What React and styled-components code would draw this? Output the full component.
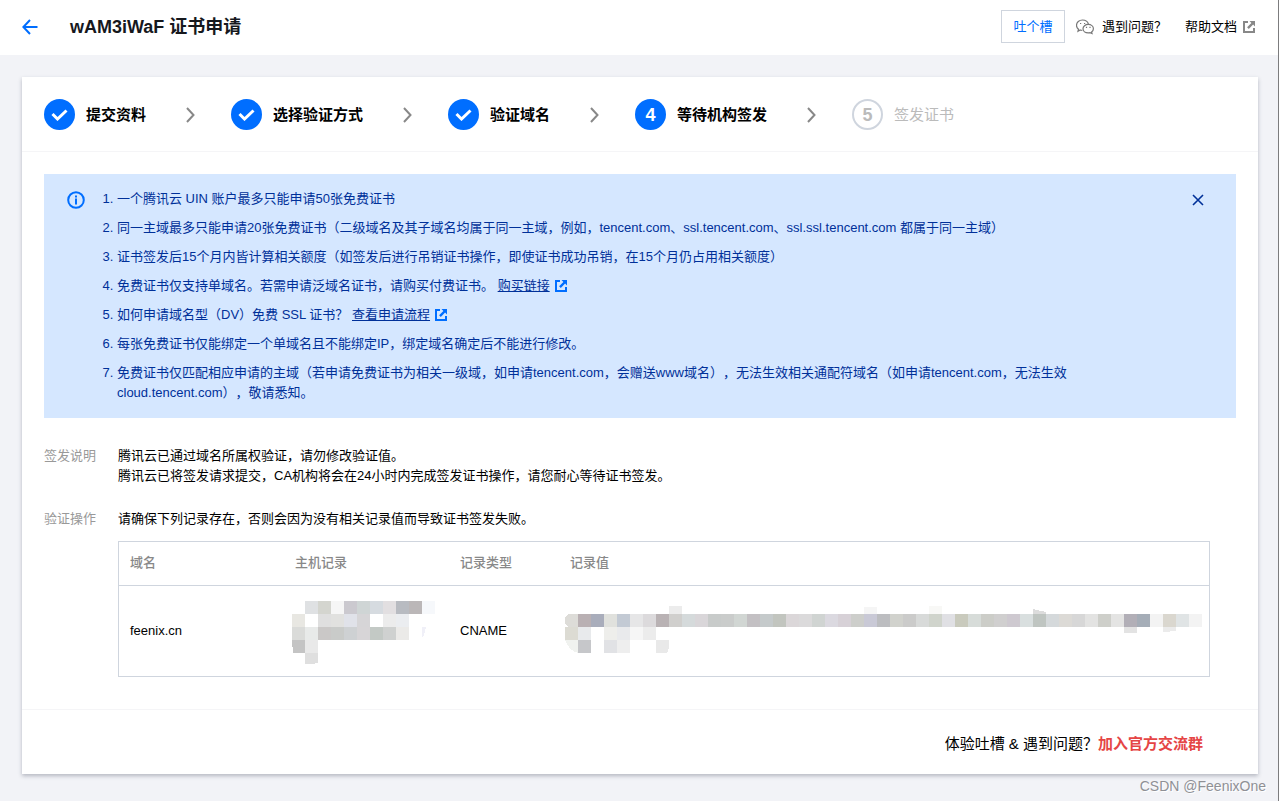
import React, { useState } from "react";
import styled, { createGlobalStyle } from "styled-components";

const STEPS = [
  { title: "提交资料", status: "done" },
  { title: "选择验证方式", status: "done" },
  { title: "验证域名", status: "done" },
  { title: "等待机构签发", status: "current" },
  { title: "签发证书", status: "wait" },
];

const TILE = 13;

// [column, top, colors of the tiles from that column on]
const HOST_MOSAIC = [
  [1, 3, "#dfe1e3 #d4d5cf #f6f6f6 #cbc9cf #cfd5d5 #d6dbe0 #e2dfe1 #b8bbc1 #bbb7b8 #f6f8fb"],
  [0, 16, "#e8e7e2 #fff #dfdfdf #e1e1df #e0e2e9 #d6d5d7 #fff #ececec #ebedf0"],
  [0, 29, "#dadbd9 #e8eae9 #cac8c7 #c9cbc9 #ced1d3 #d7d5d7 #c3c9c5 #cfd1d0 #ebeae8"],
  [1, 42, "#e9e9e9"],
];

const VALUE_MOSAIC = [
  [
    1,
    16,
    "#b9b0b3 #a9adbb #e0e1dd #c3cad4 #e6e6e7 #dcdadc #b9b2b4 #d0cfcd #d5dadb #d9d6d9 #c8cbca #cacccb #d1d6d3 #c3c0c3 #c5cacb #c2c5bf #dbd7d9 #dbdadb #d0d4d2 #dbd9e0 #d7d1d7 #cdcecb #c9c9d6 #bcbdc0 #d1d2cd #cbcbca #d8dad9 #d0d4cc #e0e0e4 #c9cabd #d7dcd9 #cccdc8 #d0cfcf #cec9d0 #d9dfdf #bfc5c1 #d5d9db #dcdad6 #d7d7d7 #e3e3e2 #cecfca #e4e4e3 #b2afb7 #a5adb7 #f3f3f3 #dad7cf #e0e4e5 #f3f3f3",
  ],
  [1, 29, "#e8eaec #fff #eeeeeb #e9eaec #f6f6f6 #ececec"],
  [1, 42, "#c6c7ca #fff #e1e2e5 #eeeeee"],
];

const tiles = (rows) =>
  rows.flatMap(([column, top, colors]) =>
    colors.split(" ").map((color, i) => (
      <rect
        key={`${top}-${column + i}`}
        x={(column + i) * TILE}
        y={top}
        width={TILE}
        height={TILE}
        fill={color}
      />
    ))
  );

const ExternalIcon = ({ color }) => (
  <LinkIcon viewBox="0 0 12 12" width="12" height="12" aria-hidden="true">
    <path d="M0 0h5v2H2v8h8V7h2v5H0z" fill={color} />
    <path d="M6.5 0H12v5.5l-1.9-1.9-4.3 4.3-1.7-1.7 4.3-4.3z" fill={color} />
  </LinkIcon>
);

const WechatIcon = () => (
  <svg width="18" height="16" viewBox="0 0 18 16" fill="none" stroke="#777" strokeWidth="1.2" aria-hidden="true">
    <path d="M6.3 11.4c-.8 0-1.4-.1-2.1-.4L2 12.2l.5-2C1.2 9.2 .5 7.9 .5 6.3c0-3 2.7-5.3 6-5.3 2.9 0 5.3 1.7 5.900 4.100" />
    <path d="M12.2 5.4c2.9 0 5.2 1.9 5.2 4.3 0 1.300-.7 2.500-1.800 3.200l.4 1.600-1.900-.9c-.6.2-1.200.3-1.900.3-2.900 0-5.200-1.900-5.200-4.200s2.300-4.300 5.200-4.300z" />
    <path d="M4 4.500h1.200M8 4.500h1.200M9.900 8.300h1.200M13.400 8.300h1.200" />
  </svg>
);

const App = () => {
  const [showNotice, setShowNotice] = useState(true);

  return (
    <Page>
      <GlobalStyle />
      <Header>
        <BackButton type="button" aria-label="返回">
          <svg width="16" height="16" viewBox="0 0 16 16" fill="none" stroke="#006eff" strokeWidth="2">
            <path d="M15.500 8H2M8 1L1.400 8 8 15" />
          </svg>
        </BackButton>
        <Title>wAM3iWaF 证书申请</Title>
        <HeaderActions>
          <FeedbackButton type="button">吐个槽</FeedbackButton>
          <HeaderLink href="#problem">
            <WechatIcon />
            遇到问题？
          </HeaderLink>
          <DocLink href="#docs">
            帮助文档
            <ExternalIcon color="#888" />
          </DocLink>
        </HeaderActions>
      </Header>

      <Card>
        <Steps>
          {STEPS.map((step, i) => (
            <Step key={step.title}>
              <StepMark $status={step.status}>
                {step.status === "done" ? (
                  <svg width="17" height="12" viewBox="0 0 17 12" fill="none" stroke="#fff" strokeWidth="3">
                    <path d="M1.500 5l5 5L15.500 1.500" />
                  </svg>
                ) : (
                  i + 1
                )}
              </StepMark>
              <StepTitle $status={step.status}>{step.title}</StepTitle>
              {i < STEPS.length - 1 && (
                <StepArrow width="9" height="16" viewBox="0 0 9 16" fill="none" stroke="#888" strokeWidth="2">
                  <path d="M1 1l6.500 7L1 15" />
                </StepArrow>
              )}
            </Step>
          ))}
        </Steps>

        <Content>
          {showNotice && (
            <Notice>
              <InfoIcon width="18" height="18" viewBox="0 0 18 18" aria-hidden="true">
                <circle cx="9" cy="9" r="7.800" fill="none" stroke="#006eff" strokeWidth="2" />
                <path d="M8 4.500h2v2H8zM8 7.500h2v6H8z" fill="#006eff" />
              </InfoIcon>
              <NoticeList>
                <li>一个腾讯云 UIN 账户最多只能申请50张免费证书</li>
                <li>
                  同一主域最多只能申请20张免费证书（二级域名及其子域名均属于同一主域，例如，tencent.com、ssl.tencent.com、ssl.ssl.tencent.com 都属于同一主域）
                </li>
                <li>证书签发后15个月内皆计算相关额度（如签发后进行吊销证书操作，即使证书成功吊销，在15个月仍占用相关额度）</li>
                <li>
                  免费证书仅支持单域名。若需申请泛域名证书，请购买付费证书。{" "}
                  <NoticeLink href="#buy">购买链接</NoticeLink>
                  <ExternalIcon color="#006eff" />
                </li>
                <li>
                  如何申请域名型（DV）免费 SSL 证书？{" "}
                  <NoticeLink href="#guide">查看申请流程</NoticeLink>
                  <ExternalIcon color="#006eff" />
                </li>
                <li>每张免费证书仅能绑定一个单域名且不能绑定IP，绑定域名确定后不能进行修改。</li>
                <li>
                  免费证书仅匹配相应申请的主域（若申请免费证书为相关一级域，如申请tencent.com，会赠送www域名），无法生效相关通配符域名（如申请tencent.com，无法生效cloud.tencent.com），敬请悉知。
                </li>
              </NoticeList>
              <CloseButton type="button" aria-label="关闭" onClick={() => setShowNotice(false)}>
                <svg width="12" height="12" viewBox="0 0 12 12" stroke="#003099" strokeWidth="1.6">
                  <path d="M1 1l10 10M11 1L1 11" />
                </svg>
              </CloseButton>
            </Notice>
          )}

          <Field>
            <FieldLabel>签发说明</FieldLabel>
            <FieldBody>
              <Text>腾讯云已通过域名所属权验证，请勿修改验证值。</Text>
              <Text>腾讯云已将签发请求提交，CA机构将会在24小时内完成签发证书操作，请您耐心等待证书签发。</Text>
            </FieldBody>
          </Field>

          <Field>
            <FieldLabel>验证操作</FieldLabel>
            <FieldBody>
              <Text>请确保下列记录存在，否则会因为没有相关记录值而导致证书签发失败。</Text>
              <Table>
                <thead>
                  <tr>
                    <Th $width="165px">域名</Th>
                    <Th $width="165px">主机记录</Th>
                    <Th $width="110px">记录类型</Th>
                    <Th $width="auto">记录值</Th>
                  </tr>
                </thead>
                <tbody>
                  <tr>
                    <Td>feenix.cn</Td>
                    <MosaicTd>
                      <svg width="147" height="66" viewBox="-2 0 147 66" shapeRendering="crispEdges">
                        {tiles(HOST_MOSAIC)}
                        <path d="M0 42h13v13H1z" fill="#c4c4c4" />
                        <path d="M13 55h13v10l-13 2z" fill="#dfdfdf" />
                        <path d="M130 29h4l-2 8-2 2z" fill="#f0f0f8" />
                      </svg>
                    </MosaicTd>
                    <Td>CNAME</Td>
                    <MosaicTd>
                      <svg width="637" height="66" viewBox="0 0 637 66" shapeRendering="crispEdges">
                        {tiles(VALUE_MOSAIC)}
                        <path d="M4 16h9v13H3l-3-3v-7z" fill="#dddcd8" />
                        <path d="M0 29h13v13H0z" fill="#dcdbd3" />
                        <path d="M0 42h13v13Q4 53 0 42z" fill="#f0f2ef" />
                        <path d="M91 42h13v8q-1 4-3 5H91z" fill="#e9e9e9" />
                        <path d="M104 8h13v8h-13z" fill="#ececec" />
                        <path d="M299 9h13v7h-13z" fill="#f5f5f5" />
                        <path d="M364 8h13v8h-13z" fill="#f8f8f6" />
                        <path d="M468 11l13 3v2h-13z" fill="#dcdcdc" />
                        <path d="M559 29h13v6h-13z" fill="#e3e3e3" />
                        <path d="M598 29h13v4l-13 1z" fill="#ebebeb" />
                      </svg>
                    </MosaicTd>
                  </tr>
                </tbody>
              </Table>
            </FieldBody>
          </Field>
        </Content>

        <Footer>
          体验吐槽 &amp; 遇到问题？<JoinLink href="#group">加入官方交流群</JoinLink>
        </Footer>
      </Card>
      <Watermark>CSDN @FeenixOne</Watermark>
    </Page>
  );
};

export default App;

const GlobalStyle = createGlobalStyle`
  * {
    box-sizing: border-box;
  }
  body {
    margin: 0;
    font-family: "Liberation Sans", "Noto Sans CJK SC", sans-serif;
    font-size: 13px;
    line-height: 20px;
    color: #000;
    text-spacing-trim: space-all;
  }
  a {
    color: inherit;
    text-decoration: none;
  }
  button {
    font: inherit;
    padding: 0;
    border: none;
    background: none;
    cursor: pointer;
  }
  svg {
    display: block;
  }
`;

const Page = styled.div`
  position: relative;
  min-height: 100vh;
  background-color: #f2f3f7;
  border-right: 1px solid #7c7c7e;
`;

const Header = styled.header`
  display: flex;
  align-items: center;
  padding: 10px 23px 12px 22px;
  background-color: white;
`;

const BackButton = styled.button`
  width: 16px;
  margin-right: 32px;
`;

const Title = styled.h1`
  margin: 0;
  font-size: 18px;
  font-weight: bold;
  color: #16181d;
`;

const HeaderActions = styled.div`
  display: flex;
  align-items: center;
  margin-left: auto;
`;

const FeedbackButton = styled.button`
  width: 64px;
  height: 33px;
  margin-right: 11px;
  border: 1px solid #cfd5de;
  color: #006eff;
`;

const HeaderLink = styled.a`
  display: flex;
  align-items: center;
  gap: 8px;
`;

const DocLink = styled(HeaderLink)`
  gap: 6px;
  margin-left: 18px;
`;

const LinkIcon = styled.svg`
  flex: none;
`;

const Card = styled.main`
  margin: 22px 20px 0 22px;
  background-color: white;
  box-shadow: 0 2px 4px rgba(54, 58, 80, 0.32);
`;

const Steps = styled.ol`
  display: flex;
  margin: 0;
  padding: 22px 22px 21px;
  border-bottom: 1px solid #f5f5f7;
  list-style: none;
`;

const Step = styled.li`
  display: flex;
  align-items: center;
`;

const StepMark = styled.span`
  display: flex;
  align-items: center;
  justify-content: center;
  width: 31px;
  height: 31px;
  margin-right: 11px;
  border: 2px solid ${({ $status }) => ($status === "wait" ? "#cfd5de" : "#006eff")};
  border-radius: 50%;
  background-color: ${({ $status }) => ($status === "wait" ? "white" : "#006eff")};
  color: ${({ $status }) => ($status === "wait" ? "#bbb" : "white")};
  font-size: 18px;
  font-weight: bold;
`;

const StepTitle = styled.span`
  font-size: 15px;
  font-weight: ${({ $status }) => ($status === "wait" ? "normal" : "bold")};
  color: ${({ $status }) => ($status === "wait" ? "#bbb" : "#000")};
`;

const StepArrow = styled.svg`
  margin: 0 36px 0 40px;
`;

const Content = styled.div`
  padding: 22px 22px 32px;
`;

const Notice = styled.section`
  display: flex;
  align-items: flex-start;
  margin-bottom: 28px;
  padding: 15px 32px 15px 23px;
  background-color: #d5e7ff;
  color: #003099;
`;

const InfoIcon = styled.svg`
  flex: none;
  margin-top: 2px;
`;

const NoticeList = styled.ol`
  flex: 1;
  display: flex;
  flex-direction: column;
  gap: 9px;
  margin: 0;
  padding: 0 32px 0 32px;

  ${LinkIcon} {
    display: inline-block;
    margin-left: 5px;
    vertical-align: -2px;
  }
`;

const NoticeLink = styled.a`
  text-decoration: underline;
`;

const CloseButton = styled.button`
  margin-top: 5px;
`;

const Field = styled.div`
  display: flex;
  margin-bottom: 23px;

  &:last-child {
    margin-bottom: 0;
  }
`;

const FieldLabel = styled.div`
  flex: none;
  width: 74px;
  color: #999;
`;

const FieldBody = styled.div`
  flex: 1;
  padding-right: 26px;
`;

const Text = styled.p`
  margin: 0;
`;

const Table = styled.table`
  width: 100%;
  margin-top: 12px;
  border: 1px solid #cfd5de;
  border-spacing: 0;
  table-layout: fixed;
`;

const Th = styled.th`
  width: ${({ $width }) => $width};
  padding: 11px 11px 12px;
  border-bottom: 1px solid #cfd5de;
  color: #888;
  font-weight: 500;
  text-align: left;
`;

const Td = styled.td`
  padding: 12px 11px;
`;

const MosaicTd = styled(Td)`
  padding: 12px 6px;
`;

const Footer = styled.footer`
  padding: 24px 55px 20px;
  border-top: 1px solid #f5f5f7;
  font-size: 15px;
  text-align: right;
`;

const JoinLink = styled.a`
  color: #e54545;
  font-weight: bold;
`;

const Watermark = styled.div`
  position: absolute;
  right: 12px;
  bottom: 5px;
  font-size: 14px;
  color: #8f9095;
  text-shadow: 1px 1px 0 white;
`;
